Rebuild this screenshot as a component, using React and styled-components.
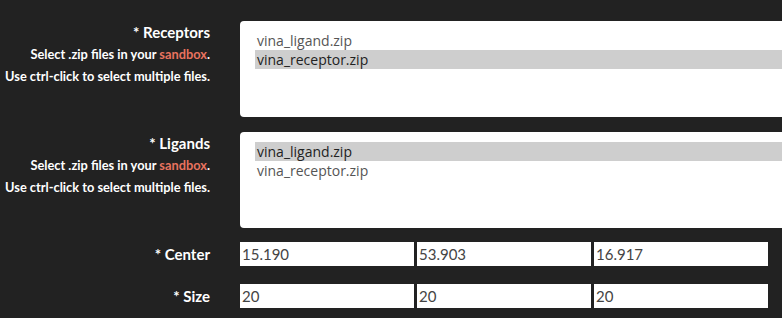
import styled, { createGlobalStyle } from "styled-components";

const GlobalStyle = createGlobalStyle`
  html, body {
    margin: 0;
    padding: 0;
    background: #222222;
  }
  body {
    font-family: Lato, "Liberation Sans", sans-serif;
    overflow: hidden;
  }
`;

const Form = styled.div`
  display: flex;
  flex-direction: column;
  padding-top: 21px;
  width: 782px;
`;

const Row = styled.div`
  display: grid;
  grid-template-columns: 210px 1fr;
  column-gap: 30px;
  align-items: ${(p) => (p.$center ? "center" : "start")};
  margin-bottom: ${(p) => p.$gap || 0}px;
`;

const Label = styled.div`
  text-align: right;
  color: #ffffff;
  font-weight: 700;
  line-height: 22px;
  white-space: nowrap;
`;

const Title = styled.div`
  font-size: 15px;
`;

const Hint = styled.div`
  font-size: 12.8px;
`;

const Link = styled.span`
  color: #e8735f;
`;

const ListBox = styled.div`
  background: #ffffff;
  border-radius: 4px 0 0 4px;
  height: 96px;
  padding: 10px 0 0 15px;
  box-sizing: border-box;
  font-family: "Open Sans", "Noto Sans", sans-serif;
  font-size: 14px;
`;

const Option = styled.div`
  height: 19px;
  line-height: 19px;
  padding-left: 2px;
  color: ${(p) => (p.$selected ? "#222222" : "#555555")};
  background: ${(p) => (p.$selected ? "#cecece" : "transparent")};
`;

const Inputs = styled.div`
  display: flex;
  gap: 3px;
`;

const Input = styled.input`
  width: 174px;
  height: 24px;
  box-sizing: border-box;
  border: none;
  border-radius: 0;
  padding: 0 2px;
  margin: 0;
  background: #ffffff;
  color: #444444;
  font-family: Lato, "Liberation Sans", sans-serif;
  font-size: 15px;
  outline: none;
`;

const files = ["vina_ligand.zip", "vina_receptor.zip"];

const FilePicker = ({ title, selected }) => (
  <>
    <Label>
      <Title>* {title}</Title>
      <Hint>
        Select .zip files in your <Link>sandbox</Link>.
      </Hint>
      <Hint>Use ctrl-click to select multiple files.</Hint>
    </Label>
    <ListBox>
      {files.map((f) => (
        <Option key={f} $selected={f === selected}>
          {f}
        </Option>
      ))}
    </ListBox>
  </>
);

const App = () => {
  return (
    <>
      <GlobalStyle />
      <Form>
        <Row $gap={15}>
          <FilePicker title="Receptors" selected="vina_receptor.zip" />
        </Row>
        <Row $gap={14}>
          <FilePicker title="Ligands" selected="vina_ligand.zip" />
        </Row>
        <Row $center $gap={18}>
          <Label>
            <Title>* Center</Title>
          </Label>
          <Inputs>
            <Input defaultValue="15.190" />
            <Input defaultValue="53.903" />
            <Input defaultValue="16.917" />
          </Inputs>
        </Row>
        <Row $center>
          <Label>
            <Title>* Size</Title>
          </Label>
          <Inputs>
            <Input defaultValue="20" />
            <Input defaultValue="20" />
            <Input defaultValue="20" />
          </Inputs>
        </Row>
      </Form>
    </>
  );
};

export default App;
